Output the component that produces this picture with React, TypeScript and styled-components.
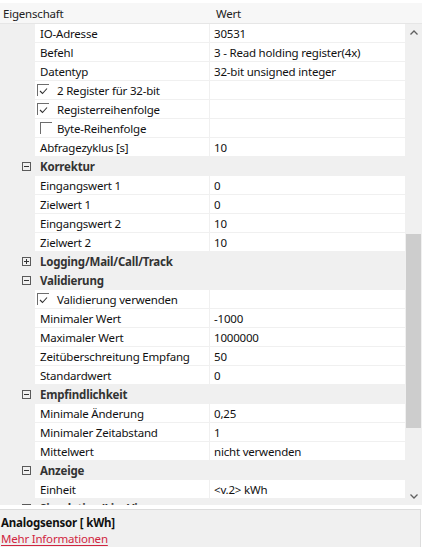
import React from "react";
import styled, { createGlobalStyle } from "styled-components";

const GlobalStyle = createGlobalStyle`
  html, body { margin: 0; padding: 0; }
  body {
    width: 422px;
    height: 547px;
    overflow: hidden;
    background: #ffffff;
    font-family: "Noto Sans", "Open Sans", "DejaVu Sans", sans-serif;
    font-size: 11.5px;
    letter-spacing: -0.2px;
    color: #000;
  }
`;

const Root = styled.div`
  display: flex;
  flex-direction: column;
  width: 422px;
  height: 547px;
`;

const Header = styled.div`
  display: grid;
  grid-template-columns: 209px 1fr;
  height: 21px;
  margin-top: 3px;
  background: #f7f7f7;
  border-bottom: 1px solid #e6e6e6;
  box-sizing: border-box;
  line-height: 22px;
  color: #222;
`;

const HeaderCell = styled.div<{ $pad: number }>`
  padding-left: ${(p) => p.$pad}px;
`;

const Body = styled.div`
  display: flex;
  height: 484px;
  overflow: hidden;
`;

const Grid = styled.div`
  flex: 1;
  display: flex;
  flex-direction: column;
  overflow: hidden;
  background: #f0f0f0;
`;

const Row = styled.div<{ $cat?: boolean }>`
  flex: 0 0 18px;
  display: flex;
  align-items: center;
  height: 18px;
  line-height: 19px;
  margin-bottom: 1px;
  background: ${(p) => (p.$cat ? "#f0f0f0" : "transparent")};
  white-space: nowrap;
`;

const Margin = styled.div`
  width: 35px;
  flex: 0 0 35px;
  height: 100%;
  display: flex;
  align-items: center;
`;

const Expander = styled.div`
  width: 9px;
  height: 9px;
  margin-left: 22px;
  box-sizing: border-box;
  border: 1px solid #5a5a5a;
  position: relative;
`;

const Bar = styled.span<{ $v?: boolean }>`
  position: absolute;
  background: #333;
  ${(p) =>
    p.$v
      ? "left: 3px; top: 1px; width: 1px; height: 5px;"
      : "left: 1px; top: 3px; width: 5px; height: 1px;"}
`;

const CatTitle = styled.div`
  padding-left: 5px;
  font-weight: 700;
  color: #333;
`;

const NameCell = styled.div<{ $check?: boolean }>`
  width: 174px;
  flex: 0 0 174px;
  height: 100%;
  background: #fff;
  padding-left: ${(p) => (p.$check ? 1 : 5)}px;
  box-sizing: border-box;
  display: flex;
  align-items: center;
  color: #111;
  overflow: hidden;
`;

const ValueCell = styled.div`
  flex: 1;
  height: 100%;
  background: #fff;
  margin-left: 1px;
  padding-left: 4px;
  color: #111;
  overflow: hidden;
`;

const CheckBox = styled.span<{ $offset: number }>`
  display: inline-block;
  flex: 0 0 12px;
  width: 12px;
  height: 12px;
  box-sizing: border-box;
  border-top: 1px solid #6d6d6d;
  border-left: 1px solid #6d6d6d;
  margin-left: ${(p) => p.$offset}px;
  margin-right: ${(p) => 9 - p.$offset}px;
  position: relative;
`;

const CheckSvg = styled.svg`
  position: absolute;
  left: 1px;
  top: 2px;
`;

const ScrollBar = styled.div`
  width: 17px;
  flex: 0 0 17px;
  background: #f0f0f0;
  display: flex;
  flex-direction: column;
`;

const Arrow = styled.div`
  height: 17px;
  display: flex;
  align-items: center;
  justify-content: center;
`;

const Track = styled.div`
  flex: 1;
  padding-top: 193px;
  box-sizing: border-box;
`;

const Thumb = styled.div`
  width: 15px;
  margin-left: 1px;
  height: 194px;
  background: #cdcdcd;
`;

const Desc = styled.div`
  margin-top: 4px;
  flex: 1;
  background: #f0f0f0;
  border-top: 1px solid #dcdcdc;
  border-right: 1px solid #dcdcdc;
  margin-right: 1px;
  padding: 5px 1px 0 1px;
  line-height: 16px;
`;

const DescTitle = styled.div`
  font-weight: 700;
  color: #111;
`;

const DescLink = styled.a`
  color: #d0253f;
  text-decoration: underline;
  text-underline-offset: 2px;
`;

type Item =
  | { t: "cat"; name: string; open: boolean }
  | { t: "prop"; name: string; value?: string }
  | { t: "check"; name: string; checked: boolean; offset: number };

const items: Item[] = [
  { t: "prop", name: "IO-Adresse", value: "30531" },
  { t: "prop", name: "Befehl", value: "3 - Read holding register(4x)" },
  { t: "prop", name: "Datentyp", value: "32-bit unsigned integer" },
  { t: "check", name: "2 Register für 32-bit", checked: true, offset: 1 },
  { t: "check", name: "Registerreihenfolge", checked: true, offset: 1 },
  { t: "check", name: "Byte-Reihenfolge", checked: false, offset: 4 },
  { t: "prop", name: "Abfragezyklus [s]", value: "10" },
  { t: "cat", name: "Korrektur", open: true },
  { t: "prop", name: "Eingangswert 1", value: "0" },
  { t: "prop", name: "Zielwert 1", value: "0" },
  { t: "prop", name: "Eingangswert 2", value: "10" },
  { t: "prop", name: "Zielwert 2", value: "10" },
  { t: "cat", name: "Logging/Mail/Call/Track", open: false },
  { t: "cat", name: "Validierung", open: true },
  { t: "check", name: "Validierung verwenden", checked: true, offset: 1 },
  { t: "prop", name: "Minimaler Wert", value: "-1000" },
  { t: "prop", name: "Maximaler Wert", value: "1000000" },
  { t: "prop", name: "Zeitüberschreitung Empfang", value: "50" },
  { t: "prop", name: "Standardwert", value: "0" },
  { t: "cat", name: "Empfindlichkeit", open: true },
  { t: "prop", name: "Minimale Änderung", value: "0,25" },
  { t: "prop", name: "Minimaler Zeitabstand", value: "1" },
  { t: "prop", name: "Mittelwert", value: "nicht verwenden" },
  { t: "cat", name: "Anzeige", open: true },
  { t: "prop", name: "Einheit", value: "<v.2> kWh" },
  { t: "cat", name: "Simulation/LiveView", open: false },
];

const Check = () => (
  <CheckSvg width="9" height="8" viewBox="0 0 9 8">
    <path d="M1 4 L3.5 6.5 L8 1.5" fill="none" stroke="#333" strokeWidth="1.1" />
  </CheckSvg>
);

const Chevron = ({ up }: { up: boolean }) => (
  <svg width="8" height="5" viewBox="0 0 8 5">
    <path
      d={up ? "M0.5 4.5 L4 1 L7.5 4.5" : "M0.5 0.5 L4 4 L7.5 0.5"}
      fill="none"
      stroke="#606060"
      strokeWidth="1.3"
    />
  </svg>
);

export default function App() {
  return (
    <Root>
      <GlobalStyle />
      <Header>
        <HeaderCell $pad={3}>Eigenschaft</HeaderCell>
        <HeaderCell $pad={7}>Wert</HeaderCell>
      </Header>
      <Body>
        <Grid>
          {items.map((it, i) => {
            if (it.t === "cat") {
              return (
                <Row key={i} $cat>
                  <Margin>
                    <Expander>
                      <Bar />
                      {!it.open && <Bar $v />}
                    </Expander>
                  </Margin>
                  <CatTitle>{it.name}</CatTitle>
                </Row>
              );
            }
            if (it.t === "check") {
              return (
                <Row key={i}>
                  <Margin />
                  <NameCell $check>
                    <CheckBox $offset={it.offset}>{it.checked && <Check />}</CheckBox>
                    {it.name}
                  </NameCell>
                  <ValueCell />
                </Row>
              );
            }
            return (
              <Row key={i}>
                <Margin />
                <NameCell>{it.name}</NameCell>
                <ValueCell>{it.value}</ValueCell>
              </Row>
            );
          })}
        </Grid>
        <ScrollBar>
          <Arrow>
            <Chevron up />
          </Arrow>
          <Track>
            <Thumb />
          </Track>
          <Arrow>
            <Chevron up={false} />
          </Arrow>
        </ScrollBar>
      </Body>
      <Desc>
        <DescTitle>Analogsensor [ kWh]</DescTitle>
        <DescLink href="#">Mehr Informationen</DescLink>
      </Desc>
    </Root>
  );
}
